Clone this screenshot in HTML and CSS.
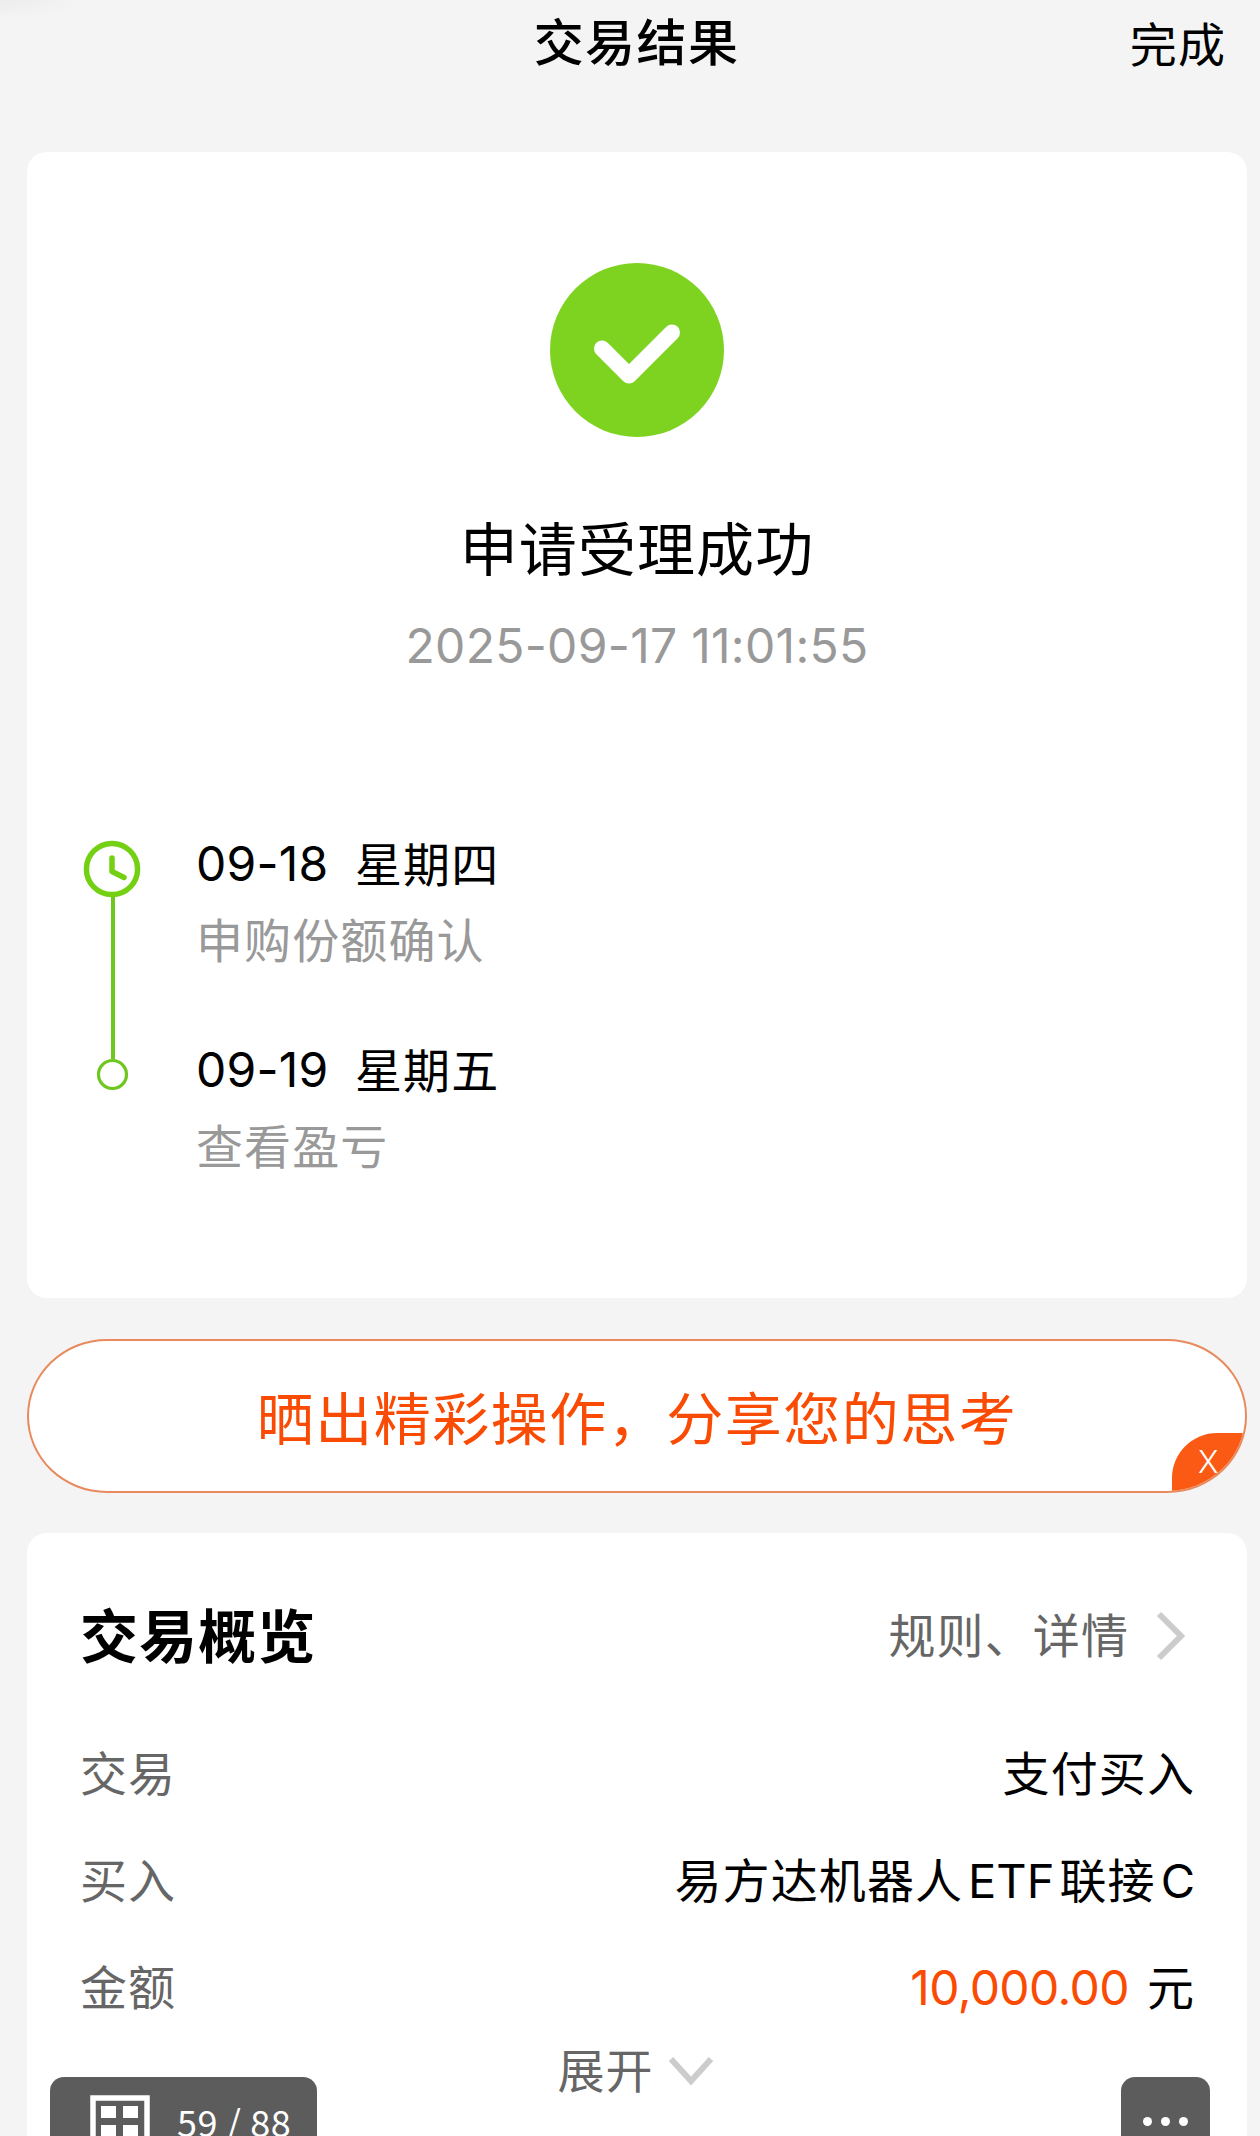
FILE: index.html
```
<!DOCTYPE html>
<html lang="zh-CN">
<head>
    <meta charset="UTF-8">
    <meta name="viewport" content="width=device-width, initial-scale=1.0">
    <title>交易结果</title>
    <link rel="stylesheet" href="styles.css">
</head>
<body>
    <header class="header">
        <h1>交易结果</h1>
        <a class="done">完成</a>
    </header>

    <section class="card result">
        <svg class="successIcon" width="174" height="174" viewBox="0 0 174 174">
            <circle cx="87" cy="87" r="87" fill="#7ed321"/>
            <path d="M52 85.500L79 112.500L122 69.500" fill="none" stroke="#fff" stroke-width="16" stroke-linecap="round" stroke-linejoin="round"/>
        </svg>
        <h2>申请受理成功</h2>
        <p class="time">2025-09-17 11:01:55</p>

        <div class="timeline">
            <svg class="track" width="58" height="252" viewBox="0 0 58 252">
                <path d="M30 56V219" stroke="#6dc71e" stroke-width="4"/>
                <circle cx="29" cy="29" r="25.600" fill="#fff" stroke="#74d013" stroke-width="5.500"/>
                <path d="M29 18V31.500L41 37.500" fill="none" stroke="#74d013" stroke-width="5.500" stroke-linecap="round" stroke-linejoin="round"/>
                <circle cx="29.500" cy="234.500" r="14" fill="#fff" stroke="#6dc71e" stroke-width="3.200"/>
            </svg>
            <ul class="steps">
                <li>
                    <p class="date"><span class="day">09-18</span><span class="week">星期四</span></p>
                    <p class="desc">申购份额确认</p>
                </li>
                <li>
                    <p class="date"><span class="day">09-19</span><span class="week">星期五</span></p>
                    <p class="desc">查看盈亏</p>
                </li>
            </ul>
        </div>
    </section>

    <section class="share">
        <span class="shareText">晒出精彩操作，分享您的思考</span>
        <span class="close">X</span>
    </section>

    <section class="card overview">
        <div class="overviewHead">
            <h3>交易概览</h3>
            <a class="more">规则、详情
                <svg width="30" height="50" viewBox="0 0 30 50"><path d="M3 3L25 25L3 47" fill="none" stroke="#ccc" stroke-width="6"/></svg>
            </a>
        </div>
        <div class="row"><span class="label">交易</span><span class="value">支付买入</span></div>
        <div class="row"><span class="label">买入</span><span class="value">易方达机器人<span class="latin">ETF</span>联接<span class="latin last">C</span></span></div>
        <div class="row"><span class="label">金额</span><span class="value"><span class="money">10,000.00</span>元</span></div>
        <a class="expand">展开
            <svg width="46" height="30" viewBox="0 0 46 30"><path d="M3 3L23 25L43 3" fill="none" stroke="#ccc" stroke-width="6"/></svg>
        </a>
    </section>

    <div class="pager">
        <svg width="60" height="60" viewBox="0 0 60 60">
            <rect x="3" y="3" width="54" height="54" fill="none" stroke="#fff" stroke-width="5.500"/>
            <path d="M11 11h15v12h-15zM33 11h15v12h-15zM11 30h15v12h-15zM33 30h15v12h-15z" fill="#fff"/>
        </svg>
        <span>59 / 88</span>
    </div>
    <div class="menuBtn"><i></i><i></i><i></i></div>
</body>
</html>
```
FILE: styles.css
```
*{
    margin: 0px;
    padding: 0px;
    box-sizing: border-box;
}
body{
    position: relative;
    width: 1260px;
    height: 2136px;
    overflow: hidden;
    background: radial-gradient(ellipse 84px 18px at 0 0, #ececec, #f4f4f4) #f4f4f4;
    font-family: Inter, "Noto Sans CJK SC", sans-serif;
    font-size: 47px;
    letter-spacing: 1.1px;
    color: #000;
}
.header{
    display: grid;
    grid-template-columns: 1fr auto 1fr;
    align-items: start;
    height: 152px;
    padding: 0 34px 0 47px;
}
.header h1{
    grid-column: 2;
    font-size: 50px;
    font-weight: 500;
    letter-spacing: 1.4px;
    line-height: 86px;
}
.done{
    justify-self: end;
    line-height: 90px;
}
.card{
    width: 1220px;
    margin-left: 27px;
    background-color: #fff;
    border-radius: 20px;
}
.result{
    display: flex;
    flex-direction: column;
    align-items: center;
    height: 1146px;
    padding-top: 111px;
}
.successIcon{
    display: block;
}
.result h2{
    margin-top: 73px;
    font-size: 58px;
    font-weight: 400;
    line-height: 80px;
}
.time{
    margin-top: 26px;
    font-size: 48px;
    line-height: 60px;
    letter-spacing: 0.3px;
    color: #999;
}
.timeline{
    display: flex;
    align-self: stretch;
    margin-top: 153px;
    padding-left: 56px;
}
.track{
    margin-top: 11px;
}
.steps{
    margin-left: 55px;
    list-style: none;
}
.steps li{
    height: 206px;
}
.date{
    display: flex;
    line-height: 70px;
}
.day{
    width: 159px;
    font-size: 48px;
    letter-spacing: 0.2px;
}
.week{
    line-height: 72px;
}
.desc{
    margin-top: 5px;
    line-height: 70px;
    color: #999;
}
.share{
    position: relative;
    display: flex;
    justify-content: center;
    width: 1220px;
    height: 154px;
    margin: 41px 0 40px 27px;
    overflow: hidden;
    background-color: #fff;
    border: 2px solid #e88a5e;
    border-radius: 80px / 77px;
}
.shareText{
    font-size: 57px;
    letter-spacing: 1.5px;
    line-height: 157px;
    color: #fa4b05;
}
.close{
    position: absolute;
    right: 0;
    bottom: 0;
    width: 73px;
    height: 58px;
    padding-left: 26px;
    border-top-left-radius: 45px;
    background-color: #fa5a14;
    font-size: 31px;
    font-weight: 300;
    line-height: 58px;
    color: #fff;
}
.overview{
    height: 640px;
    padding: 49px 52px 0 53px;
}
.overviewHead{
    display: flex;
    justify-content: space-between;
    height: 138px;
    line-height: 108px;
}
.overviewHead h3{
    font-size: 58px;
    font-weight: 700;
    line-height: 110px;
}
.more{
    display: flex;
    align-items: center;
    height: 107px;
    padding-right: 9px;
    color: #666;
}
.more svg{
    margin-left: 27px;
}
.row{
    display: flex;
    justify-content: space-between;
    height: 107px;
    line-height: 107px;
}
.label{
    color: #666;
}
.latin{
    padding: 0 5px;
    font-size: 47px;
    letter-spacing: 0;
}
.last{
    padding-right: 0;
}
.money{
    margin-right: 18px;
    font-size: 48px;
    letter-spacing: -0.6px;
    color: #fa4b05;
}
.expand{
    display: flex;
    justify-content: center;
    align-items: center;
    height: 52px;
    color: #666;
}
.expand svg{
    margin: 8px 4px 0 14px;
}
/* floating viewer controls at the bottom edge */
.pager{
    position: absolute;
    left: 50px;
    top: 2077px;
    display: flex;
    width: 267px;
    height: 90px;
    padding: 18px 0 0 40px;
    border-radius: 14px;
    background-color: #5c5c5c;
    font-family: "Noto Sans CJK SC", sans-serif;
    font-size: 36px;
    letter-spacing: 0.6px;
    line-height: 53px;
    color: #fff;
}
.pager span{
    margin-left: 27px;
}
.menuBtn{
    position: absolute;
    left: 1121px;
    top: 2077px;
    display: flex;
    justify-content: center;
    gap: 9px;
    width: 89px;
    height: 90px;
    padding-top: 40px;
    border-radius: 14px;
    background-color: #5c5c5c;
}
.menuBtn i{
    width: 9px;
    height: 9px;
    border-radius: 50%;
    background-color: #fff;
}
```
